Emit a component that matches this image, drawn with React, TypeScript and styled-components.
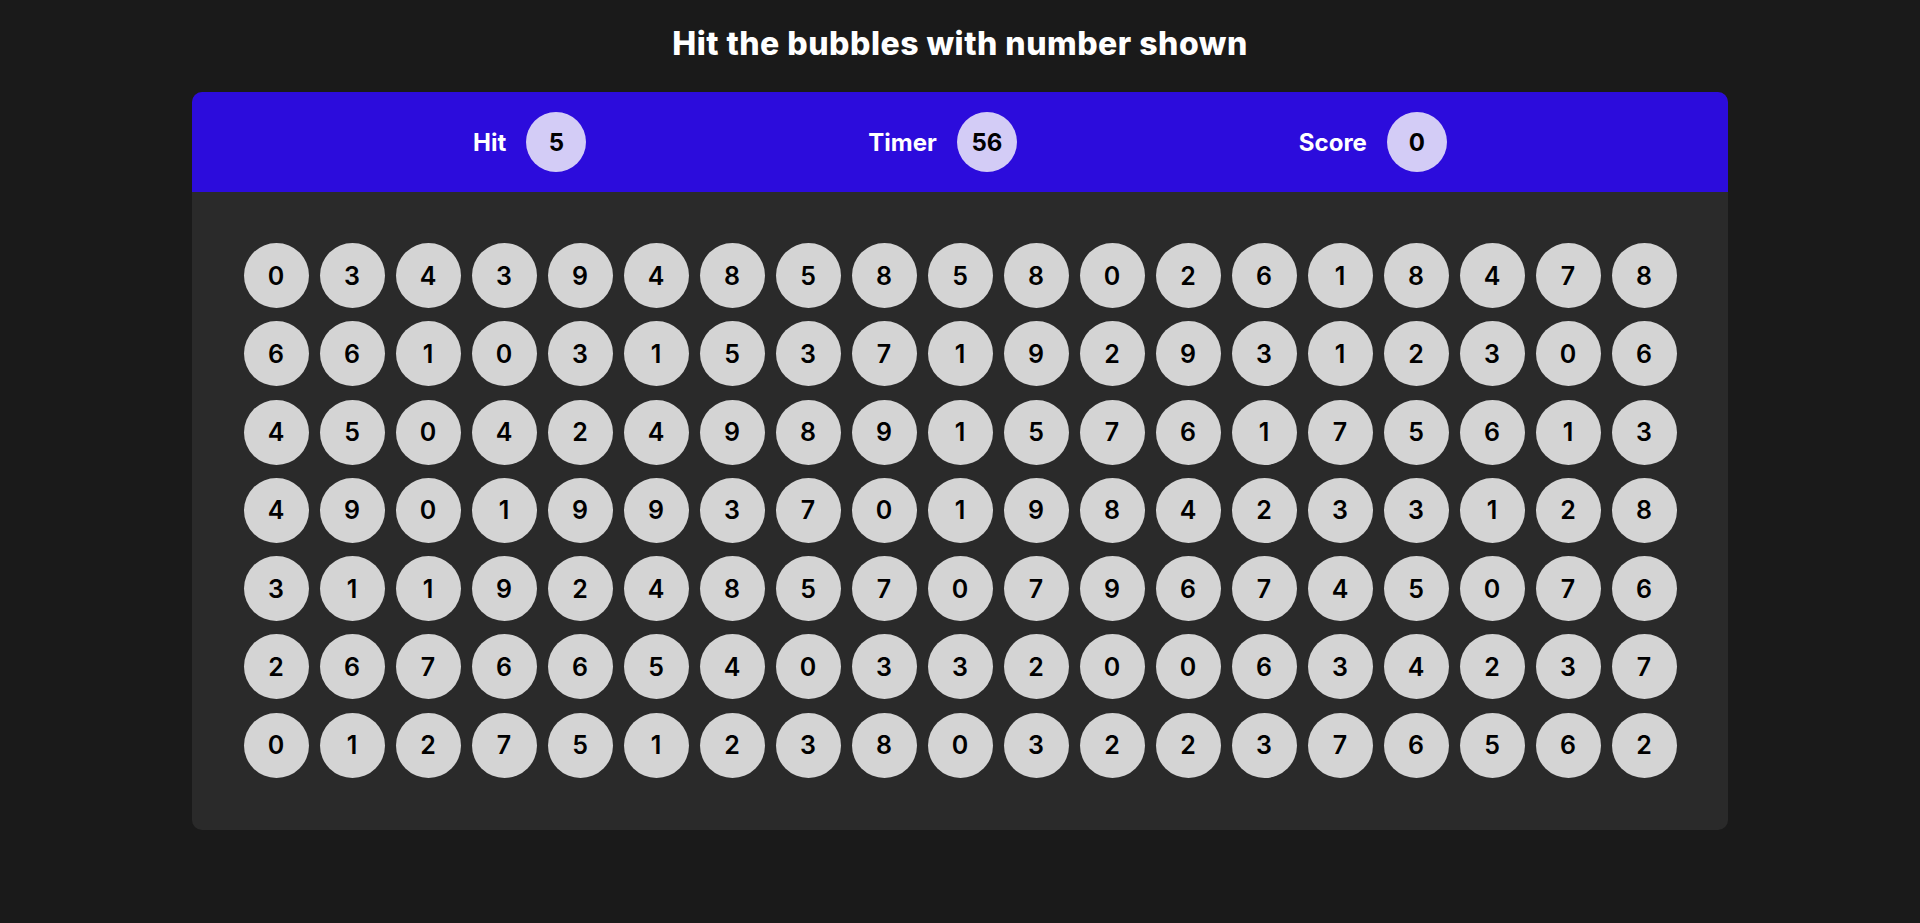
import React from "react";
import styled, { createGlobalStyle } from "styled-components";

const GlobalStyle = createGlobalStyle`
  html, body {
    margin: 0;
    padding: 0;
    background: #1a1a1a;
  }
  * { box-sizing: border-box; }
`;

const Page = styled.div`
  min-height: 923px;
  display: flex;
  flex-direction: column;
  align-items: center;
  padding-top: 24px;
  font-family: Inter, "Noto Sans", sans-serif;
`;

const Title = styled.h1`
  margin: 0;
  font-size: 32px;
  line-height: 40px;
  font-weight: 800;
  color: #ffffff;
  letter-spacing: 0.5px;
`;

const Panel = styled.div`
  margin-top: 28px;
  width: 80%;
  height: 738px;
  background: #2a2a2a;
  border-radius: 10px;
  overflow: hidden;
  display: flex;
  flex-direction: column;
`;

const Header = styled.div`
  height: 100px;
  flex-shrink: 0;
  background: #2c0cdc;
  display: flex;
  align-items: center;
  justify-content: center;
  gap: 282px;
`;

const Stat = styled.div`
  display: flex;
  align-items: center;
  gap: 20px;
`;

const StatLabel = styled.span`
  color: #ffffff;
  font-size: 24px;
  font-weight: 700;
`;

const StatValue = styled.div`
  width: 60px;
  height: 60px;
  border-radius: 50%;
  background: #d3ccf6;
  color: #000000;
  display: flex;
  align-items: center;
  justify-content: center;
  font-size: 24px;
  font-weight: 700;
`;

const Board = styled.div`
  flex: 1;
  padding-top: 51px;
  display: grid;
  grid-template-columns: repeat(19, 65px);
  grid-auto-rows: 65px;
  column-gap: 11px;
  row-gap: 13.3px;
  justify-content: center;
  align-content: start;
`;

const Bubble = styled.div`
  width: 65px;
  height: 65px;
  border-radius: 50%;
  background: #d4d4d4;
  color: #000000;
  display: flex;
  align-items: center;
  justify-content: center;
  font-size: 25px;
  font-weight: 600;
  cursor: pointer;
`;

const rows = [
  "0343948585802618478",
  "6610315371929312306",
  "4504249891576175613",
  "4901993701984233128",
  "3119248570796745076",
  "2676654033200634237",
  "0127512380322376562",
];

const numbers = rows.join("").split("");

export default function App() {
  return (
    <>
      <GlobalStyle />
      <Page>
        <Title>Hit the bubbles with number shown</Title>
        <Panel>
          <Header>
            <Stat>
              <StatLabel>Hit</StatLabel>
              <StatValue>5</StatValue>
            </Stat>
            <Stat>
              <StatLabel>Timer</StatLabel>
              <StatValue>56</StatValue>
            </Stat>
            <Stat>
              <StatLabel>Score</StatLabel>
              <StatValue>0</StatValue>
            </Stat>
          </Header>
          <Board>
            {numbers.map((n, i) => (
              <Bubble key={i}>{n}</Bubble>
            ))}
          </Board>
        </Panel>
      </Page>
    </>
  );
}
